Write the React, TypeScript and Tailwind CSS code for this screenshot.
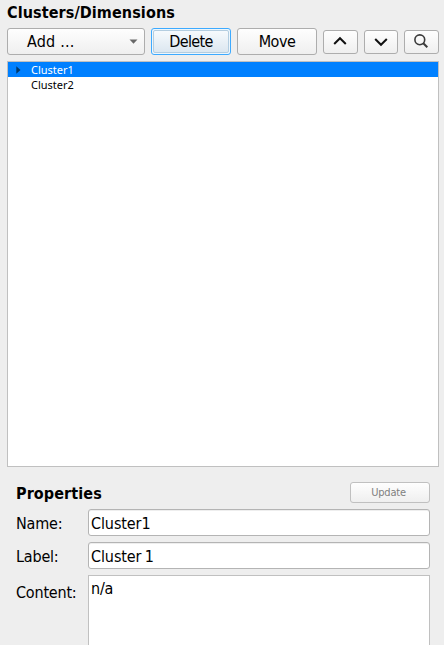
import type { ReactNode } from "react";

const BUTTON =
  "flex shrink-0 items-center rounded-[3px] border border-[#adadad] bg-linear-to-b from-[#fefefe] to-[#efefef]";

function Field({ label, value }: { label: string; value: string }) {
  return (
    <div className="flex h-[27px]">
      <label className="w-[72px] shrink-0 leading-[29px]">{label}</label>
      <div className="flex-1 rounded-[3px] border border-[#b4b4b4] bg-white pl-[2px] leading-[27px] tracking-[-0.1px] [word-spacing:-1px] shadow-[inset_0_1px_0_#eeeeee]">
        {value}
      </div>
    </div>
  );
}

function IconButton({ className, children }: { className: string; children: ReactNode }) {
  return <button className={`${BUTTON} h-6 justify-center ${className}`}>{children}</button>;
}

export default function App() {
  return (
    <div className="flex h-[645px] w-[444px] flex-col overflow-hidden bg-[#eeeeee] pl-[7px] pr-[5px] font-['DejaVu_Sans_Condensed','DejaVu_Sans',sans-serif] text-[16px] tracking-[-0.2px] text-black [font-stretch:condensed]">
      <h1 className="h-7 font-bold leading-[26px] tracking-[0.1px]">Clusters/Dimensions</h1>

      <div className="flex h-[27px] items-center gap-[6px]">
        <button className={`${BUTTON} h-[27px] w-[138px] justify-between pl-[19px] pr-[6px]`}>
          <span className="pt-px tracking-[0.2px]">Add ...</span>
          <svg width="9" height="5" viewBox="0 0 9 5">
            <path d="M0.5 0.5h8L4.5 4.7z" fill="#686868" />
          </svg>
        </button>
        <button className="flex h-[27px] w-20 shrink-0 rounded-[3px] border border-[#3daaff] bg-[#edf6fc] p-px">
          <span className="flex h-full w-full items-center justify-center rounded-[2px] border border-[#b3cde0] bg-linear-to-b from-[#f6fafd] to-[#dce7f0] pt-px tracking-[-0.6px]">
            Delete
          </span>
        </button>
        <button className={`${BUTTON} h-[27px] w-20 justify-center pt-px tracking-[-0.5px]`}>Move</button>
        <IconButton className="w-[35px]">
          <svg width="14" height="10" viewBox="0 0 14 10" fill="none" stroke="#111" strokeWidth="2" className="mr-px mb-px">
            <path d="M1.2 8L7 2.2l5.8 5.8" />
          </svg>
        </IconButton>
        <IconButton className="w-[34px]">
          <svg width="14" height="10" viewBox="0 0 14 10" fill="none" stroke="#111" strokeWidth="2">
            <path d="M1.2 2L7 7.8l5.8-5.8" />
          </svg>
        </IconButton>
        <IconButton className="w-[35px]">
          <svg width="14" height="14" viewBox="0 0 14 14" fill="none" stroke="#3b3b3b" strokeWidth="1.6" className="mr-[2px] mb-[2px]">
            <circle cx="5.8" cy="5.8" r="4.9" />
            <path d="M9.3 9.3l4 4" strokeWidth="2" />
          </svg>
        </IconButton>
      </div>

      <div className="mt-[6px] h-[406px] shrink-0 border border-[#c0c0c0] bg-white font-['Noto_Sans',sans-serif] text-[11px] leading-[15px] tracking-normal">
        <div className="flex h-[15px] items-center bg-[#0080ff] pl-[8px] text-white">
          <svg width="5" height="8" viewBox="0 0 5 8" className="mr-[10px]">
            <path d="M0.3 0.3L4.5 4 0.3 7.7z" fill="#003769" />
          </svg>
          Cluster1
        </div>
        <div className="h-[15px] pl-[23px]">Cluster2</div>
      </div>

      <div className="mt-[15px] flex flex-1 flex-col gap-[6px] pl-[9px] pr-[9px]">
        <div className="flex h-[21px] items-center justify-between">
          <h2 className="pt-[2px] font-bold tracking-[0.1px]">Properties</h2>
          <button className={`${BUTTON} h-[21px] w-20 justify-center border-[#c0c0c0] pr-[3px] pt-px text-[11px] text-[#7f7f7f]`}>
            Update
          </button>
        </div>
        <Field label="Name:" value="Cluster1" />
        <Field label="Label:" value="Cluster 1" />
        <div className="flex flex-1">
          <label className="w-[72px] shrink-0 pt-[8px] leading-5">Content:</label>
          <div className="flex-1 border border-b-0 border-[#c0c0c0] bg-white pl-[2px] pt-[3px] leading-5">n/a</div>
        </div>
      </div>
    </div>
  );
}
